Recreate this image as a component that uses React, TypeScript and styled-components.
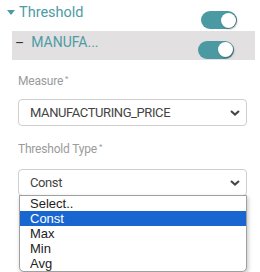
import React from 'react'
import styled, { createGlobalStyle } from 'styled-components'

const GlobalStyle = createGlobalStyle`
    body {
        margin: 0;
        background: #ffffff;
        font-family: Roboto, "Liberation Sans", sans-serif;
    }
`

const Panel = styled.div`
    width: 260px;
    height: 272px;
    position: relative;
`

const SectionHeader = styled.div`
    display: flex;
    align-items: center;
    height: 31px;
    padding: 0 23px 0 7px;
    box-sizing: border-box;
`

const Caret = styled.span`
    width: 0;
    height: 0;
    border-left: 4px solid transparent;
    border-right: 4px solid transparent;
    border-top: 5px solid #4e9aa4;
    margin-top: -6px;
    margin-right: 4px;
`

const Title = styled.span`
    flex: 1;
    color: #4e9ba5;
    font-size: 14.5px;
    line-height: 17px;
    margin-top: -7px;
`

const SubRow = styled.div`
    display: flex;
    align-items: center;
    height: 29px;
    margin: 0 5px 0 12px;
    padding: 0 21px 0 3px;
    background: #e2e0e0;
    box-sizing: border-box;
`

const Dash = styled.span`
    color: #333333;
    font-size: 14px;
    margin-right: 7px;
    margin-top: -6px;
`

const SubTitle = styled.span`
    flex: 1;
    color: #4e9ba5;
    font-size: 14px;
    line-height: 17px;
    margin-top: -6px;
`

const Track = styled.div<{ $offset: number }>`
    position: relative;
    width: 36px;
    height: 18px;
    border-radius: 9px;
    background: #4b9aa3;
    margin-top: ${p => p.$offset}px;
`

const Knob = styled.div`
    position: absolute;
    right: 1px;
    top: 1.5px;
    width: 15px;
    height: 15px;
    border-radius: 50%;
    background: #ffffff;
    box-shadow: 1px 1px 2px rgba(0, 0, 0, 0.35);
`

const Field = styled.div<{ $top: number }>`
    position: relative;
    padding: 0 13px 0 18px;
    margin-top: ${p => p.$top}px;
`

const Label = styled.div<{ $gap: number }>`
    color: #9b9b9b;
    font-size: 12px;
    line-height: 14px;
    letter-spacing: -0.2px;
    margin-bottom: ${p => p.$gap}px;

    & sup {
        font-size: 8px;
        margin-left: 2px;
        vertical-align: 4px;
    }
`

const SelectBox = styled.div`
    display: flex;
    align-items: center;
    height: 27px;
    padding: 0 6px 0 11px;
    border: 1px solid #cfcfcf;
    border-radius: 4px;
    box-sizing: border-box;
    color: #444444;
    font-size: 13px;
    letter-spacing: -0.4px;
`

const SelectValue = styled.span`
    flex: 1;
`

const OptionList = styled.ul`
    position: absolute;
    left: 19px;
    right: 13px;
    top: 100%;
    margin: -1px 0 0;
    padding: 0;
    list-style: none;
    background: #ffffff;
    border: 1px solid #a0a0a0;
    border-radius: 0 0 5px 5px;
    box-shadow: 1px 2px 4px rgba(0, 0, 0, 0.25);
    overflow: hidden;
`

const Option = styled.li<{ $selected?: boolean }>`
    height: 15px;
    line-height: 15px;
    padding-left: 10px;
    font-family: "Liberation Sans", Arial, sans-serif;
    font-size: 13px;
    color: ${p => (p.$selected ? '#ffffff' : '#222222')};
    background: ${p => (p.$selected ? '#1a66d1' : 'transparent')};
`

const Chevron = () => (
    <svg width="10" height="6" viewBox="0 0 10 6">
        <path d="M1 1 L5 4.6 L9 1" fill="none" stroke="#444" strokeWidth="2" />
    </svg>
)

const Toggle = ({ offset }: { offset: number }) => (
    <Track $offset={offset}>
        <Knob />
    </Track>
)

const options = ['Select..', 'Const', 'Max', 'Min', 'Avg']

export default function App() {
    return (
        <Panel>
            <GlobalStyle />
            <SectionHeader>
                <Caret />
                <Title>Threshold</Title>
                <Toggle offset={9} />
            </SectionHeader>
            <SubRow>
                <Dash>–</Dash>
                <SubTitle>MANUFA...</SubTitle>
                <Toggle offset={8} />
            </SubRow>
            <Field $top={12}>
                <Label $gap={11}>Measure<sup>*</sup></Label>
                <SelectBox>
                    <SelectValue>MANUFACTURING_PRICE</SelectValue>
                    <Chevron />
                </SelectBox>
            </Field>
            <Field $top={14}>
                <Label $gap={13}>Threshold Type<sup>*</sup></Label>
                <SelectBox>
                    <SelectValue>Const</SelectValue>
                    <Chevron />
                </SelectBox>
                <OptionList>
                    {options.map(o => (
                        <Option key={o} $selected={o === 'Const'}>{o}</Option>
                    ))}
                </OptionList>
            </Field>
        </Panel>
    )
}
